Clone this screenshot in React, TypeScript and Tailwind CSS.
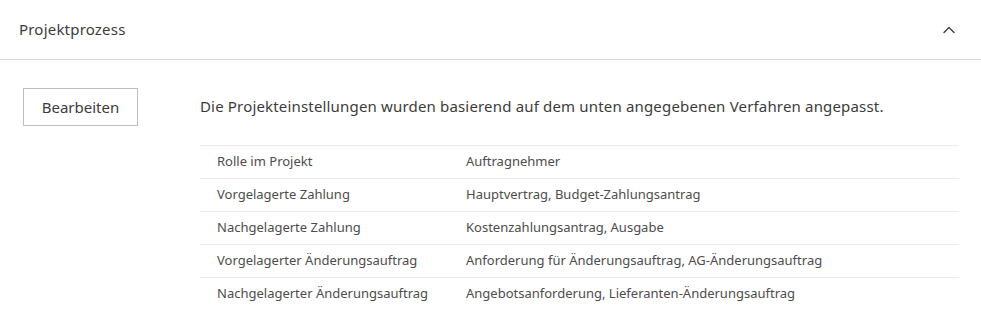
import { ChevronUp } from 'lucide-react';

const rows = [
  ['Rolle im Projekt', 'Auftragnehmer'],
  ['Vorgelagerte Zahlung', 'Hauptvertrag, Budget-Zahlungsantrag'],
  ['Nachgelagerte Zahlung', 'Kostenzahlungsantrag, Ausgabe'],
  ['Vorgelagerter Änderungsauftrag', 'Anforderung für Änderungsauftrag, AG-Änderungsauftrag'],
  ['Nachgelagerter Änderungsauftrag', 'Angebotsanforderung, Lieferanten-Änderungsauftrag'],
];

const App = () => {
  return (
    <div className="w-[981px] h-[309px] overflow-hidden bg-white text-[#3c3c3c] font-['Noto_Sans',sans-serif]">
      <div className="h-[60px] flex items-center justify-between pl-[19px] pr-[22px] border-b border-[#dcdcdc]">
        <span className="text-[15px] tracking-[0.2px]">Projektprozess</span>
        <ChevronUp size={20} strokeWidth={1.6} className="text-[#3c3c3c]" />
      </div>
      <div className="flex pt-[28px] pl-[23px] pr-[22px]">
        <button className="w-[115px] h-[38px] shrink-0 border border-[#bfbfbf] text-[15px] text-[#3c3c3c]">Bearbeiten</button>
        <div className="ml-[62px] flex-1">
          <p className="text-[15px] tracking-[0.17px] leading-[36px]">Die Projekteinstellungen wurden basierend auf dem unten angegebenen Verfahren angepasst.</p>
          <div className="mt-[21px]">
            {rows.map(([k, v]) => (
              <div key={k} className="flex h-[33px] items-center border-t border-[#ebebeb] text-[13px] text-[#4d4d4d]">
                <span className="w-[266px] pl-[17px]">{k}</span>
                <span>{v}</span>
              </div>
            ))}
          </div>
        </div>
      </div>
    </div>
  );
};

export default App;
